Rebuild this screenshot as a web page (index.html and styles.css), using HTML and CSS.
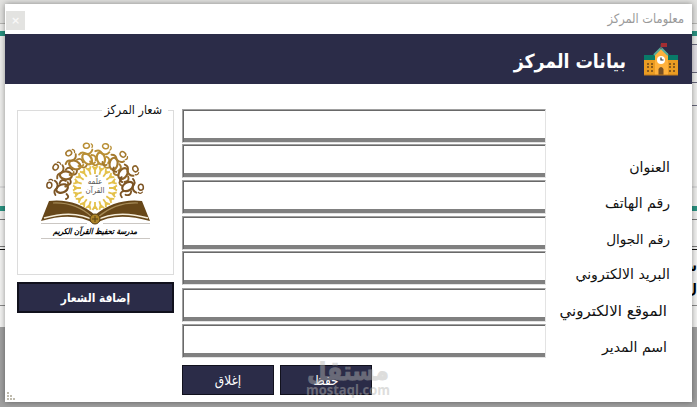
FILE: index.html
```html
<!DOCTYPE html>
<html lang="ar" dir="rtl">
<head>
  <meta charset="UTF-8" />
  <meta name="viewport" content="width=device-width, initial-scale=1.0" />
  <title>معلومات المركز</title>
  <link rel="stylesheet" href="styles.css">
</head>
<body>
  <!-- parts of the page behind the window -->
  <svg class="backdrop" width="697" height="407" viewBox="0 0 697 407" shape-rendering="crispEdges">
    <rect width="697" height="407" fill="#eeeeec"/>
    <rect width="697" height="23" fill="#e2e2e0"/>
    <rect y="23" width="697" height="1" fill="#b5b5b2"/>
    <rect y="31" width="697" height="5" fill="#2a9180"/>
    <rect x="690" y="45" width="7" height="27" fill="#e2dfe5"/>
    <rect x="690" y="44" width="7" height="1" fill="#66667a"/>
    <rect x="690" y="72" width="7" height="1" fill="#66667a"/>
    <rect x="690" y="82" width="7" height="1" fill="#66667a"/>
    <rect x="690" y="105" width="7" height="1" fill="#66667a"/>
    <rect y="186" width="697" height="2" fill="#dadada"/>
    <rect y="206" width="697" height="5" fill="#2a9180"/>
    <rect y="219" width="697" height="1" fill="#777"/>
    <rect y="220" width="697" height="107" fill="#f3f3f2"/>
    <rect y="246" width="697" height="1" fill="#777"/>
    <rect y="249" width="697" height="1" fill="#111"/>
    <rect y="305" width="697" height="1" fill="#888"/>
    <rect y="327" width="697" height="80" fill="#a0a0a0"/>
    <text class="behind" x="697" y="271">س</text>
    <text class="behind" x="697" y="294">ل</text>
  </svg>

  <div class="window">
    <div class="titlebar">
      <span class="title">معلومات المركز</span>
      <button class="close">×</button>
    </div>

    <div class="header">
      <svg class="school" width="34" height="34" viewBox="0 0 34 34">
        <path d="M0 13h34v19H0z" fill="#eb9c22"/>
        <path d="M0 12h34v5H0z" fill="#087a68"/>
        <path d="M11 11l6-6 7 6v21H11z" fill="#ffb13c"/>
        <path d="M10 12l7-7 7 7" fill="none" stroke="#5aaa99" stroke-width="2"/>
        <path d="M17 1v5" stroke="#59434a"/>
        <path d="M17 0h6v4h-6z" fill="#a22d32"/>
        <circle cx="17" cy="17" r="4" fill="#fff"/>
        <path d="M17 14.5V17h2.5" fill="none" stroke="#333" stroke-width="1.2"/>
        <path d="M3 20h2v2H3zm4 0h2v2H7zM3 23h2v2H3zm4 0h2v2H7zM3 27h2v2H3zm4 0h2v2H7zM25 20h2v2h-2zm4 0h2v2h-2zM25 23h2v2h-2zm4 0h2v2h-2zM25 27h2v2h-2zm4 0h2v2h-2z" fill="#8b5c1d"/>
        <path d="M14.5 32v-6q2.500-4 5 0v6z" fill="#785126"/>
        <path d="M0 32h34" stroke="#c57c1c"/>
      </svg>
      <h1>بيانات المركز</h1>
    </div>

    <div class="content">
      <form class="fields">
        <div class="row"><label></label><input type="text"></div>
        <div class="row"><label>العنوان</label><input type="text"></div>
        <div class="row"><label>رقم الهاتف</label><input type="text"></div>
        <div class="row"><label class="narrow">رقم الجوال</label><input type="text"></div>
        <div class="row"><label>البريد الالكتروني</label><input type="text"></div>
        <div class="row indent"><label class="wide">الموقع الالكتروني</label><input type="text"></div>
        <div class="row indent"><label>اسم المدير</label><input type="text"></div>
        <div class="actions">
          <button type="button">حفظ</button>
          <button type="button">إغلاق</button>
        </div>
      </form>

      <div class="side">
        <fieldset>
          <legend>شعار المركز</legend>
          <svg class="logo" width="110" height="98" viewBox="0 0 110 98">
            <defs>
              <g id="figure" fill="none" stroke-linecap="round">
                <ellipse cx="-1" cy="-33" rx="4" ry="6" stroke-width="2.200" transform="rotate(-26 -1 -33)"/>
                <path d="M-8-39q4-3 7 1q5 1 7-3M-6-28q-3 4-5 0M3-29q1 6 6 3M4-36q5 1 3 6" stroke-width="1.900"/>
                <ellipse cx="1" cy="-46" rx="3" ry="2.500" stroke-width="1.500"/>
                <path d="M6-47q2 2 0 4" stroke-width="1.200"/>
              </g>
              <path id="ray" d="M0-14V-21M-2.500-22L0-18L2.500-22" fill="none" stroke="#e4c14a" stroke-width="1.800"/>
            </defs>
            <g transform="translate(54 50)">
              <use href="#figure" stroke="#7c5424" transform="rotate(-84)"/>
              <use href="#figure" stroke="#8b6127" transform="rotate(-60)"/>
              <use href="#figure" stroke="#a57a2e" transform="rotate(-36)"/>
              <use href="#figure" stroke="#b98f35" transform="rotate(-12)"/>
              <use href="#figure" stroke="#b98f35" transform="rotate(12)"/>
              <use href="#figure" stroke="#a57a2e" transform="rotate(36)"/>
              <use href="#figure" stroke="#8b6127" transform="rotate(60)"/>
              <use href="#figure" stroke="#7c5424" transform="rotate(84)"/>
            </g>
            <g class="rays" transform="translate(54 47)"></g>
            <text class="emblem" x="54" y="43">علّمه</text>
            <text class="emblem" x="54" y="52">القرآن</text>
            <path d="M8 60Q34 57 54 74Q75 57 101 60L109 80Q74 70 54 83Q33 70 0 80z" fill="#674719"/>
            <path d="M12 62Q35 61 51 76M97 62Q75 61 57 76" fill="none" stroke="#a58a57" stroke-width="1.200"/>
            <path d="M3 77Q34 68 54 80Q75 68 107 77" fill="none" stroke="#f5edda" stroke-width="1.500"/>
            <circle cx="54" cy="78" r="5" fill="#ad8428" stroke="#574015"/>
            <path d="M51 78h6M54 75v6" stroke="#574015"/>
            <path d="M0 82.500H46M62 82.500H109M0 97.500H109" stroke="#cbc7c3"/>
            <text class="logo-name" x="54" y="93" textLength="84" lengthAdjust="spacingAndGlyphs">مدرسة تحفيظ القرآن الكريم</text>
          </svg>
        </fieldset>
        <button class="add-logo">إضافة الشعار</button>
      </div>
    </div>

    <svg class="grip" width="8" height="8" viewBox="0 0 8 8" shape-rendering="crispEdges">
      <path d="M0 0h2v2H0zM0 3h2v2H0zM3 3h2v2H3zM0 6h2v2H0zM3 6h2v2H3zM6 6h2v2H6z" fill="#bfbbae"/>
    </svg>
  </div>

  <div class="watermark">
    <svg width="86" height="40" viewBox="0 0 86 40">
      <text class="mark-ar" x="43" y="19" textLength="82" lengthAdjust="spacingAndGlyphs">مستقل</text>
      <text class="mark-en" x="43" y="34" textLength="84" lengthAdjust="spacingAndGlyphs">mostaql.com</text>
    </svg>
  </div>

  <script>
    // sun rays around the logo emblem
    const rays = document.querySelector(".rays");
    for (let i = 0; i < 20; i++) {
      const ray = document.createElementNS("http://www.w3.org/2000/svg", "use");
      ray.setAttribute("href", "#ray");
      ray.setAttribute("transform", `rotate(${i * 18})`);
      rays.appendChild(ray);
    }
  </script>
</body>
</html>
```
FILE: styles.css
```css
* {
  box-sizing: border-box;
}
body {
  margin: 0;
  padding: 4px 5px 5px;
  height: 407px;
  overflow: hidden;
  font-family: "DejaVu Sans Condensed", "DejaVu Sans", sans-serif;
  color: #111;
}
.backdrop {
  position: absolute;
  top: 0;
  left: 0;
  z-index: -1;
}
.behind {
  font-size: 14px;
  font-weight: bold;
}
.window {
  position: relative;
  height: 398px;
  background: #fff;
  box-shadow: 0 0 6px rgba(0, 0, 0, 0.4);
}
.titlebar {
  display: flex;
  justify-content: space-between;
  height: 30px;
  padding: 0 8px 0 1px;
}
.title {
  font-size: 12.7px;
  line-height: 30px;
  color: #999;
}
.close {
  width: 19px;
  height: 19px;
  margin-top: 7px;
  padding: 0;
  border: 0;
  background: #e3e3e1;
  color: #f8f8f8;
  font: bold 11px/19px "DejaVu Sans", sans-serif;
}
.header {
  display: flex;
  align-items: center;
  height: 50px;
  padding-right: 14px;
  background: #2b2c48;
  color: #fff;
}
.school {
  margin-top: 2px;
}
h1 {
  margin: 5px 18px 0 0;
  font-size: 19.3px;
  line-height: 30px;
}
.content {
  display: flex;
  justify-content: space-between;
  padding: 25px 22px 0 12px;
}
.fields {
  display: grid;
  grid-template-rows: 35px 36px 36px 35px 37px 36px 41px 30px;
  width: 488px;
}
.row {
  display: flex;
  align-items: center;
  justify-content: space-between;
  height: 34px;
}
label {
  padding-top: 12px;
  font-family: "DejaVu Sans", sans-serif;
  font-size: 14.1px;
  line-height: 20px;
  white-space: nowrap;
}
.narrow {
  font-size: 13.6px;
}
.wide {
  font-size: 15px;
}
.indent label {
  padding-right: 3px;
}
input {
  width: 364px;
  height: 34px;
  border: 1px solid;
  border-color: #a0a0a0 #e3e3e3 #e3e3e3 #a0a0a0;
  background: #fff;
  box-shadow: inset 1px 1px #696969, inset 0 -4px #808080;
}
.actions {
  display: flex;
  justify-content: flex-end;
  gap: 6px;
}
.actions button, .add-logo {
  padding: 0;
  border: 1px solid #11111d;
  background: #2b2c48;
  color: #fff;
  font-family: inherit;
}
.actions button {
  width: 92px;
  height: 30px;
  font-size: 13.5px;
}
.side {
  width: 157px;
}
fieldset {
  height: 172px;
  margin: -6px 0 0;
  padding: 0;
  border: 1px solid #dcdcdc;
}
legend {
  margin-right: 5px;
  padding: 0 6px 0 2px;
  font-size: 12.4px;
  line-height: 14px;
}
.logo {
  display: block;
  margin: 24px 22px 0 0;
}
.emblem {
  font-size: 8px;
  text-anchor: middle;
  fill: #555;
}
.logo-name {
  font-size: 8px;
  font-weight: bold;
  font-style: italic;
  text-anchor: middle;
}
.add-logo {
  width: 157px;
  height: 31px;
  margin-top: 7px;
  border-width: 2px;
  font-size: 11.8px;
  font-weight: bold;
}
.grip {
  position: absolute;
  bottom: 2px;
  left: 2px;
}
.watermark {
  position: absolute;
  top: 361px;
  left: 305px;
  opacity: 0.45;
}
.watermark text {
  text-anchor: middle;
  font-weight: bold;
  fill: #b5b5b2;
}
.mark-ar {
  font-size: 26px;
  stroke: #b5b5b2;
  stroke-width: 0.8;
}
.mark-en {
  font-family: "Open Sans", sans-serif;
  font-size: 14px;
}
```
